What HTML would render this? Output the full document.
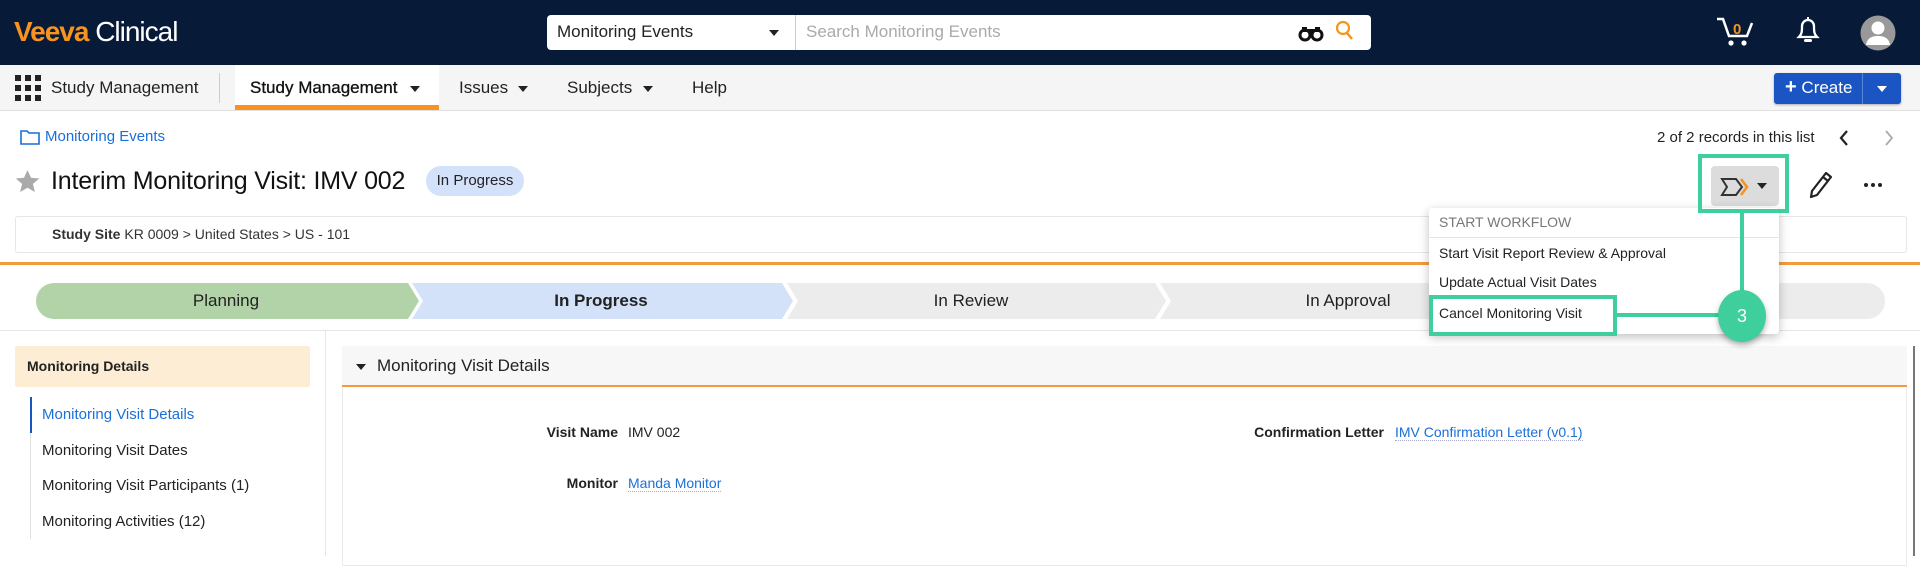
<!DOCTYPE html>
<html><head><meta charset="utf-8"><style>
*{box-sizing:border-box;margin:0;padding:0}
body{width:1920px;height:556px;overflow:hidden;background:#fff;font-family:"Liberation Sans",Arial,sans-serif;color:#222;position:relative}
.a{position:absolute;white-space:nowrap}
</style></head><body>
<!-- top bar -->
<div class="a" style="left:0;top:0;width:1920px;height:65px;background:#071a38"></div>
<div class="a" style="left:14px;top:17px;font-size:28px;line-height:30px;letter-spacing:-1px;font-weight:bold"><span style="color:#f7931e">Veeva</span><span style="color:#fff;font-weight:normal"> Clinical</span></div>
<div class="a" style="left:547px;top:15px;width:824px;height:35px;background:#fff;border-radius:4px"></div>
<div class="a" style="left:795px;top:15px;width:1px;height:35px;background:#ccc"></div>
<div class="a" style="left:557px;top:22px;font-size:17px;color:#222">Monitoring Events</div>
<div class="a" style="left:769px;top:30px;width:0;height:0;border-left:5px solid transparent;border-right:5px solid transparent;border-top:6px solid #222"></div>
<div class="a" style="left:806px;top:22px;font-size:17px;color:#aaa">Search Monitoring Events</div>
<svg class="a" style="left:1298px;top:24px" width="26" height="18" viewBox="0 0 26 18"><circle cx="7" cy="11" r="5" fill="none" stroke="#111" stroke-width="3"/><circle cx="19" cy="11" r="5" fill="none" stroke="#111" stroke-width="3"/><rect x="10" y="5" width="6" height="4" fill="#111"/><rect x="4" y="3" width="5" height="5" fill="#111"/><rect x="17" y="3" width="5" height="5" fill="#111"/></svg>
<svg class="a" style="left:1335px;top:20px" width="20" height="22" viewBox="0 0 20 22"><circle cx="8" cy="8" r="6" fill="none" stroke="#f7931e" stroke-width="2.2"/><line x1="12" y1="13" x2="17" y2="19" stroke="#f7931e" stroke-width="2.5"/></svg>
<svg class="a" style="left:1715px;top:16px" width="42" height="32" viewBox="0 0 42 32"><path d="M2 3h6l6 17h18l5-13" fill="none" stroke="#fff" stroke-width="2.5"/><circle cx="16" cy="27" r="2.6" fill="#fff"/><circle cx="29" cy="27" r="2.6" fill="#fff"/><text x="18" y="18" font-size="15" font-weight="bold" fill="#f7931e" font-family="Liberation Sans">0</text></svg>
<svg class="a" style="left:1795px;top:15px" width="26" height="30" viewBox="0 0 26 30"><path d="M4 22c3-3 3-6 3-11a6 6 0 0 1 12 0c0 5 0 8 3 11z" fill="none" stroke="#fff" stroke-width="2.3"/><rect x="9" y="24" width="8" height="3" rx="1.5" fill="#fff"/><rect x="12" y="2" width="2" height="3" fill="#fff"/></svg>
<svg class="a" style="left:1860px;top:15px" width="36" height="36" viewBox="0 0 36 36"><circle cx="18" cy="18" r="17.5" fill="#999"/><circle cx="18" cy="13" r="6.5" fill="#fff"/><path d="M6 30c1-7 6-9 12-9s11 2 12 9z" fill="#fff"/></svg>
<!-- nav -->
<div class="a" style="left:0;top:65px;width:1920px;height:46px;background:#f5f5f5;border-bottom:1px solid #e0e0e0"></div>
<svg class="a" style="left:15px;top:75px" width="26" height="26" viewBox="0 0 26 26"><g fill="#222"><rect x="0" y="0" width="6" height="6"/><rect x="10" y="0" width="6" height="6"/><rect x="20" y="0" width="6" height="6"/><rect x="0" y="10" width="6" height="6"/><rect x="10" y="10" width="6" height="6"/><rect x="20" y="10" width="6" height="6"/><rect x="0" y="20" width="6" height="6"/><rect x="10" y="20" width="6" height="6"/><rect x="20" y="20" width="6" height="6"/></g></svg>
<div class="a" style="left:51px;top:78px;font-size:17px">Study Management</div>
<div class="a" style="left:219px;top:73px;width:1px;height:30px;background:#ccc"></div>
<div class="a" style="left:235px;top:65px;width:204px;height:45px;background:#fff;border-bottom:5px solid #f7931e"></div>
<div class="a" style="left:250px;top:78px;font-size:17px;color:#111;-webkit-text-stroke:0.3px #111">Study Management</div>
<div class="a" style="left:410px;top:86px;border-left:5px solid transparent;border-right:5px solid transparent;border-top:6px solid #222"></div>
<div class="a" style="left:459px;top:78px;font-size:17px">Issues</div>
<div class="a" style="left:518px;top:86px;border-left:5px solid transparent;border-right:5px solid transparent;border-top:6px solid #222"></div>
<div class="a" style="left:567px;top:78px;font-size:17px">Subjects</div>
<div class="a" style="left:643px;top:86px;border-left:5px solid transparent;border-right:5px solid transparent;border-top:6px solid #222"></div>
<div class="a" style="left:692px;top:78px;font-size:17px">Help</div>
<div class="a" style="left:1774px;top:73px;width:127px;height:31px;background:#1b55c4;border-radius:3px;box-shadow:0 1px 2px rgba(0,0,0,.3)"></div>
<div class="a" style="left:1862px;top:73px;width:1px;height:31px;background:#5a86d6"></div>
<div class="a" style="left:1785px;top:78px;font-size:17px;color:#fff"><b style="font-size:20px;line-height:18px">+</b> Create</div>
<div class="a" style="left:1877px;top:86px;border-left:5px solid transparent;border-right:5px solid transparent;border-top:6px solid #fff"></div>
<!-- header -->
<svg class="a" style="left:20px;top:129px" width="20" height="16" viewBox="0 0 20 16"><path d="M1 2h6l2 2h10v11H1z" fill="none" stroke="#1a6fd8" stroke-width="1.6"/></svg>
<div class="a" style="left:45px;top:128px;font-size:15px;color:#1a6fd8">Monitoring Events</div>
<div class="a" style="left:1657px;top:129px;font-size:15px">2 of 2 records in this list</div>
<svg class="a" style="left:1838px;top:129px" width="12" height="18" viewBox="0 0 12 18"><path d="M9 2L3 9l6 7" fill="none" stroke="#222" stroke-width="2.2"/></svg>
<svg class="a" style="left:1883px;top:129px" width="12" height="18" viewBox="0 0 12 18"><path d="M3 2l6 7-6 7" fill="none" stroke="#aaa" stroke-width="1.8"/></svg>
<svg class="a" style="left:14px;top:169px" width="27" height="25" viewBox="0 0 24 23"><path d="M12 1l3.2 7 7.6.7-5.8 5 1.8 7.5L12 17.3 5.2 21.2 7 13.7l-5.8-5L8.8 8z" fill="#aaa"/></svg>
<div class="a" style="left:51px;top:167px;font-size:25px;color:#111;letter-spacing:-0.2px">Interim Monitoring Visit: IMV 002</div>
<div class="a" style="left:426px;top:166px;width:98px;height:30px;background:#d3e2fa;border-radius:15px;font-size:15px;line-height:30px;text-align:center">In Progress</div>
<div class="a" style="left:1711px;top:166px;width:68px;height:40px;background:#dcdcdc;border-radius:4px"></div>
<svg class="a" style="left:1720px;top:177px" width="34" height="20" viewBox="0 0 34 20"><path d="M2 2h14l6 8-6 8H2l5-8z" fill="none" stroke="#333" stroke-width="2"/><path d="M21 2l6 8-6 8" fill="none" stroke="#f7931e" stroke-width="2.6"/></svg>
<div class="a" style="left:1757px;top:183px;border-left:5px solid transparent;border-right:5px solid transparent;border-top:6px solid #222"></div>
<svg class="a" style="left:1808px;top:170px" width="26" height="30" viewBox="0 0 26 30"><path d="M18 3l5 4L9 25l-6 2 1-6z M15 7l5 4" fill="none" stroke="#222" stroke-width="2.2" stroke-linejoin="round"/></svg>
<div class="a" style="left:1864px;top:183px;width:4px;height:4px;background:#222;border-radius:2px;box-shadow:7px 0 #222,14px 0 #222"></div>
<div class="a" style="left:15px;top:216px;width:1892px;height:37px;border:1px solid #e6e6e6;border-radius:3px"></div>
<div class="a" style="left:52px;top:226px;font-size:14px;color:#333"><b>Study Site</b> KR 0009 &gt; United States &gt; US - 101</div>
<div class="a" style="left:0;top:262px;width:1920px;height:3px;background:#f39a3c"></div>
<!-- stages -->
<svg class="a" style="left:0;top:283px" width="1920" height="36" viewBox="0 0 1920 36">
<path d="M54 0H408L419 18L408 36H54a18 18 0 0 1 0-36z" fill="#b2d3a7"/>
<path d="M412 0H782L793 18L782 36H412L423 18z" fill="#d3e2f9"/>
<path d="M787 0H1155L1166 18L1155 36H787L798 18z" fill="#ececec"/>
<path d="M1160 0H1867a18 18 0 0 1 0 36H1160L1171 18z" fill="#ececec"/>
</svg>
<div class="a" style="left:36px;top:291px;width:380px;text-align:center;font-size:17px">Planning</div>
<div class="a" style="left:415px;top:291px;width:372px;text-align:center;font-size:17px;font-weight:bold">In Progress</div>
<div class="a" style="left:871px;top:291px;width:200px;text-align:center;font-size:17px">In Review</div>
<div class="a" style="left:1248px;top:291px;width:200px;text-align:center;font-size:17px">In Approval</div>
<div class="a" style="left:0;top:330px;width:1920px;height:1px;background:#e6e6e6"></div>
<!-- left panel -->
<div class="a" style="left:325px;top:331px;width:1px;height:225px;background:#e6e6e6"></div>
<div class="a" style="left:15px;top:346px;width:295px;height:41px;background:#fdedd4;border-radius:2px;font-size:14px;font-weight:bold;line-height:41px;padding-left:12px">Monitoring Details</div>
<div class="a" style="left:30px;top:397px;width:1px;height:142px;background:#e0e0e0"></div>
<div class="a" style="left:30px;top:397px;width:2px;height:36px;background:#1b55c4"></div>
<div class="a" style="left:42px;top:406px;font-size:15px;color:#1a6fd8">Monitoring Visit Details</div>
<div class="a" style="left:42px;top:442px;font-size:15px">Monitoring Visit Dates</div>
<div class="a" style="left:42px;top:477px;font-size:15px">Monitoring Visit Participants (1)</div>
<div class="a" style="left:42px;top:513px;font-size:15px">Monitoring Activities (12)</div>
<!-- main section -->
<div class="a" style="left:342px;top:346px;width:1565px;height:220px;border:1px solid #ebebeb"></div>
<div class="a" style="left:342px;top:346px;width:1565px;height:41px;background:#f7f7f7;border-bottom:2px solid #f39a3c"></div>
<div class="a" style="left:356px;top:364px;border-left:5px solid transparent;border-right:5px solid transparent;border-top:6px solid #222"></div>
<div class="a" style="left:377px;top:356px;font-size:17px">Monitoring Visit Details</div>
<div class="a" style="left:1913px;top:346px;width:2px;height:210px;background:#777"></div>
<div class="a" style="left:440px;top:424px;width:178px;text-align:right;font-size:14px;font-weight:bold">Visit Name</div>
<div class="a" style="left:628px;top:424px;font-size:14px">IMV 002</div>
<div class="a" style="left:440px;top:475px;width:178px;text-align:right;font-size:14px;font-weight:bold">Monitor</div>
<div class="a" style="left:628px;top:475px;font-size:14px;color:#1a6fd8;border-bottom:1px dotted #aac">Manda Monitor</div>
<div class="a" style="left:1150px;top:424px;width:234px;text-align:right;font-size:14px;font-weight:bold">Confirmation Letter</div>
<div class="a" style="left:1395px;top:424px;font-size:14px;color:#1a6fd8;border-bottom:1px dotted #aac">IMV Confirmation Letter (v0.1)</div>
<!-- dropdown -->
<div class="a" style="left:1429px;top:208px;width:350px;height:126px;background:#fff;border-radius:3px;box-shadow:0 3px 10px rgba(0,0,0,.25)"></div>
<div class="a" style="left:1439px;top:214px;font-size:14px;color:#777">START WORKFLOW</div>
<div class="a" style="left:1429px;top:237px;width:350px;height:1px;background:#e4e4e4"></div>
<div class="a" style="left:1439px;top:245px;font-size:14px">Start Visit Report Review &amp; Approval</div>
<div class="a" style="left:1439px;top:274px;font-size:14px">Update Actual Visit Dates</div>
<div class="a" style="left:1439px;top:305px;font-size:14px">Cancel Monitoring Visit</div>
<!-- annotations -->
<div class="a" style="left:1698px;top:154px;width:91px;height:59px;border:4px solid #3ecf9c"></div>
<div class="a" style="left:1740px;top:213px;width:4px;height:80px;background:#3ecf9c"></div>
<div class="a" style="left:1429px;top:295px;width:188px;height:41px;border:4px solid #3ecf9c"></div>
<div class="a" style="left:1617px;top:313px;width:110px;height:4px;background:#3ecf9c"></div>
<div class="a" style="left:1718px;top:290px;width:48px;height:52px;border-radius:50%;background:#3ecf9c;box-shadow:0 3px 6px rgba(0,0,0,.3);color:#fff;font-size:18px;text-align:center;line-height:52px">3</div>
</body></html>
